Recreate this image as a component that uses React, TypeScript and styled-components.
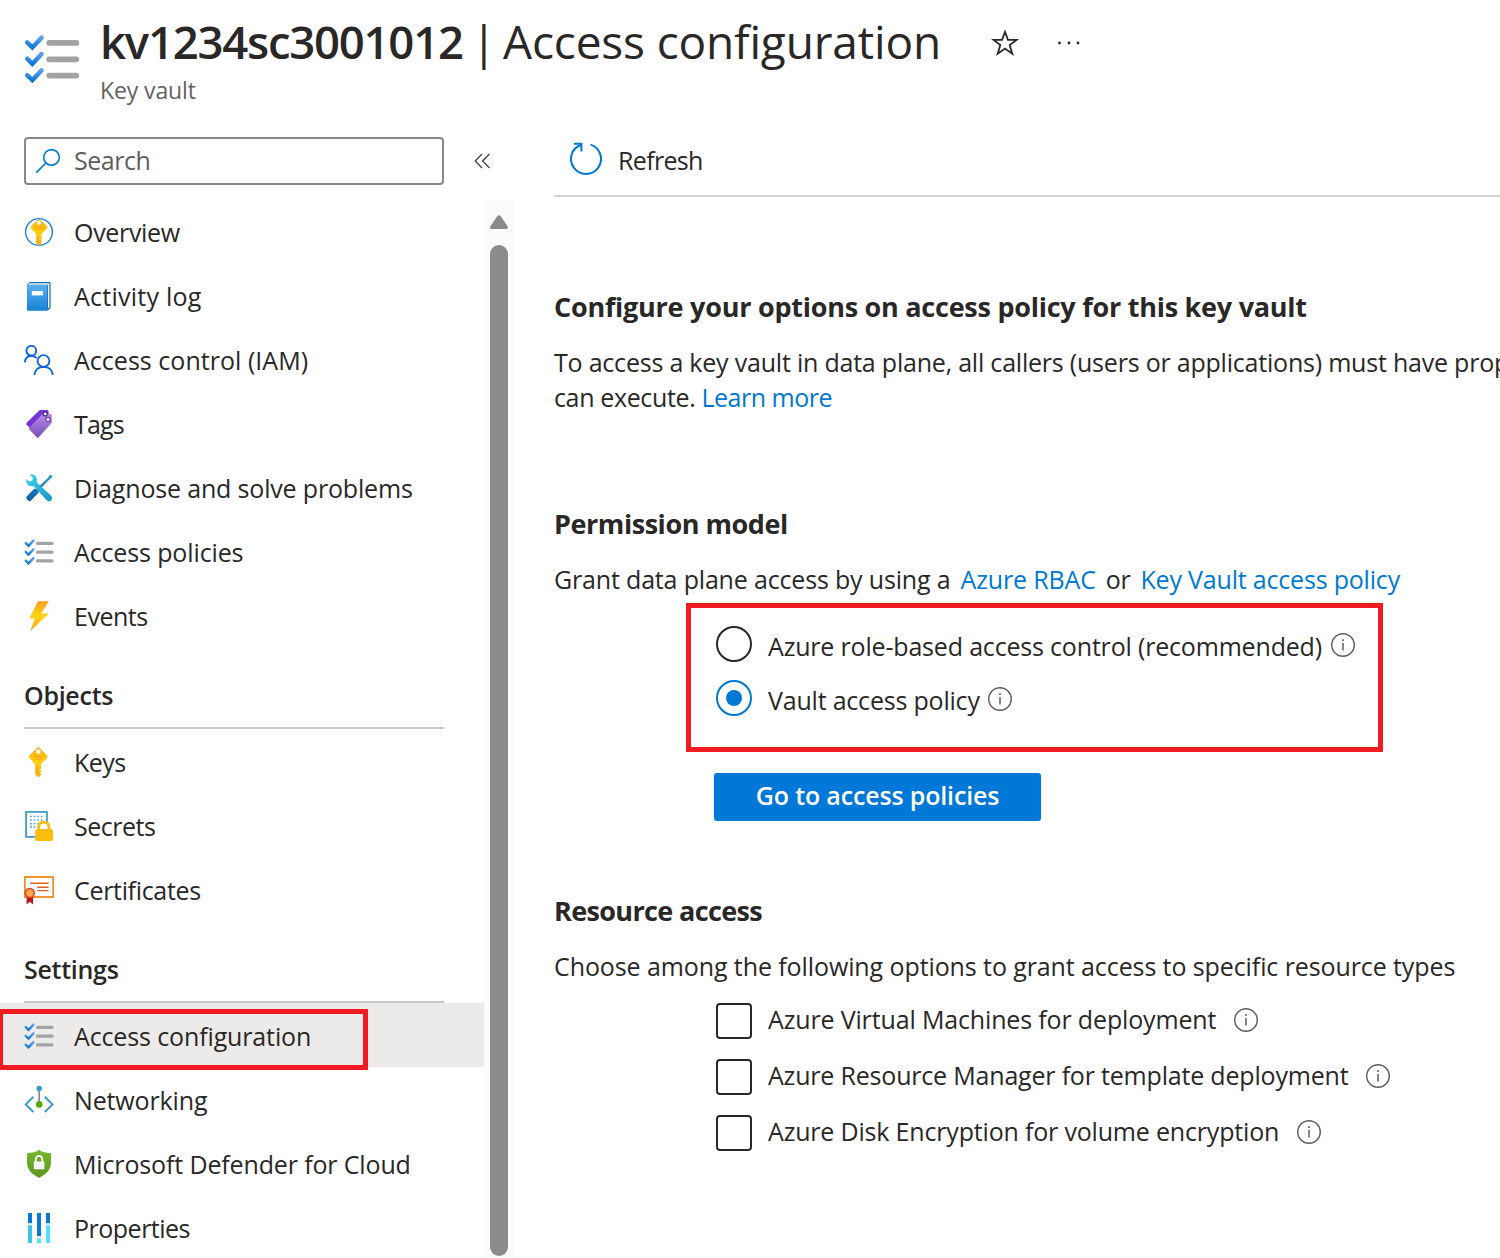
import React from "react";
import styled, { createGlobalStyle } from "styled-components";

const GlobalStyle = createGlobalStyle`
  *, *::before, *::after { box-sizing: border-box; }
  body { margin: 0; background: #fff; }
`;

const Page = styled.div`
  display: flex;
  flex-direction: column;
  width: 1500px;
  height: 1258px;
  overflow: hidden;
  background: #fff;
  color: #292827;
  font-family: "Open Sans", "Noto Sans", sans-serif;
  font-size: 25px;
  line-height: 35px;
  white-space: nowrap;
`;

const Label = styled.span<{ $ls?: number }>`
  letter-spacing: ${(p) => p.$ls ?? 0}px;
`;

/* ---------- header ---------- */

const Header = styled.header`
  display: flex;
  flex: none;
  height: 137px;
  padding-left: 24px;
`;

const HeaderIcon = styled.div`
  width: 76px;
  padding-top: 31px;
  svg { display: block; }
`;

const TitleRow = styled.div`
  display: flex;
  align-items: center;
  height: 64px;
  margin-top: 9px;
  font-size: 46px;
  line-height: 64px;
`;

const TitleName = styled.h1`
  width: 367px;
  margin: 0;
  font-size: 45.5px;
  font-weight: 640;
  letter-spacing: -1.24px;
`;

const TitleDivider = styled.span`
  width: 36px;
  text-align: center;
  padding-right: 2px;
`;

const TitlePage = styled.span`
  width: 488px;
  letter-spacing: -0.16px;
`;

const TitleActions = styled.div`
  display: flex;
  align-items: center;
  gap: 38px;
  padding-top: 4px;
  svg { display: block; }
`;

const Subtitle = styled.div`
  font-size: 23px;
  line-height: 34px;
  letter-spacing: -0.12px;
  color: #646260;
`;

/* ---------- sidebar ---------- */

const Body = styled.div`
  display: flex;
  flex: 1;
  min-height: 0;
`;

const Sidebar = styled.aside`
  display: flex;
  flex-direction: column;
  width: 514px;
  flex: none;
`;

const SearchRow = styled.div`
  display: flex;
  align-items: center;
  gap: 30px;
  height: 48px;
  margin: 0 0 14px 24px;
  flex: none;
`;

const SearchBox = styled.div`
  display: flex;
  align-items: center;
  width: 420px;
  height: 48px;
  padding: 0 0 1px 9px;
  border: 2px solid #8a8886;
  border-radius: 4px;
  color: #605e5c;
  svg { width: 26px; margin-right: 13px; }
`;

const MenuScroller = styled.div`
  display: flex;
  flex: 1;
  min-height: 0;
`;

const Menu = styled.nav`
  flex: none;
  width: 484px;
  overflow: hidden;
`;

const MenuItem = styled.div<{ $selected?: boolean }>`
  position: relative;
  display: flex;
  align-items: center;
  gap: 20px;
  height: 64px;
  padding: 2px 0 0 24px;
  background: ${(p) => (p.$selected ? "#edebe9" : "transparent")};
  svg { display: block; flex: none; }
`;

const ItemHighlight = styled.div`
  position: absolute;
  left: -2px;
  top: 6px;
  width: 370px;
  height: 61px;
  border: 5px solid #f01b23;
  z-index: 1;
`;

const MenuHeading = styled.h2`
  height: 82px;
  width: 420px;
  margin: 0 0 0 24px;
  padding-top: 31px;
  border-bottom: 2px solid #c8c8c8;
  font-size: 25px;
  font-weight: 600;
  line-height: 35px;
  letter-spacing: -0.28px;
`;

const ScrollTrack = styled.div`
  display: flex;
  flex-direction: column;
  align-items: center;
  width: 29px;
  margin-left: 1px;
  padding: 16px 1px 2px 0;
  background: #fcfcfc;
  svg { display: block; flex: none; }
`;

const ScrollThumb = styled.div`
  flex: 1;
  width: 18px;
  margin-top: 15px;
  border-radius: 9px;
  background: #8b8b8b;
`;

/* ---------- content ---------- */

const Main = styled.main`
  width: 946px;
  margin-left: 40px;
  overflow: hidden;
`;

const Toolbar = styled.div`
  display: flex;
  align-items: flex-start;
  gap: 16px;
  height: 60px;
  padding: 5px 0 0 16px;
  border-bottom: 2px solid #d4d4d4;
`;

const ToolbarLabel = styled.span`
  padding-top: 1px;
  letter-spacing: -0.66px;
`;

const SectionTitle = styled.h3<{ $top: number; $ls: number }>`
  margin: ${(p) => p.$top}px 0 20px;
  font-size: 27px;
  font-weight: 670;
  line-height: 36px;
  letter-spacing: ${(p) => p.$ls}px;
`;

const Paragraph = styled.p`
  margin: 0;
`;

const Link = styled.a<{ $ls: number }>`
  color: #0078d4;
  text-decoration: none;
  letter-spacing: ${(p) => p.$ls}px;
`;

const GrantLine = styled.p`
  display: flex;
  gap: 10px;
  margin: 0;
`;

const RadioGroup = styled.div`
  display: flex;
  flex-direction: column;
  gap: 18px;
  width: 697px;
  height: 149px;
  margin: 6px 0 21px 132px;
  padding: 18px 0 0 25px;
  border: 5px solid #f01b23;
`;

const Option = styled.div`
  display: flex;
  align-items: center;
  height: 36px;
`;

const OptionLabel = styled.span<{ $ls: number; $gap: number; $drop?: number }>`
  margin: ${(p) => (p.$drop ?? 0)}px ${(p) => p.$gap}px 0 16px;
  letter-spacing: ${(p) => p.$ls}px;
`;

const Radio = styled.span<{ $checked?: boolean }>`
  display: grid;
  place-items: center;
  width: 36px;
  height: 36px;
  border: 2px solid ${(p) => (p.$checked ? "#0078d4" : "#292827")};
  border-radius: 50%;
  &::after {
    content: "";
    width: 16px;
    height: 16px;
    border-radius: 50%;
    background: ${(p) => (p.$checked ? "#0078d4" : "transparent")};
  }
`;

const PrimaryButton = styled.button`
  display: block;
  width: 327px;
  height: 48px;
  margin: 0 0 0 160px;
  padding: 0 0 3px;
  border: 0;
  border-radius: 3px;
  background: #0078d7;
  color: #fff;
  font: 630 25px/35px "Open Sans", "Noto Sans", sans-serif;
  letter-spacing: -0.16px;
`;

const CheckGroup = styled.div`
  display: flex;
  flex-direction: column;
  gap: 20px;
  margin: 19px 0 0 162px;
`;

const CheckBox = styled.span`
  width: 36px;
  height: 36px;
  border: 2px solid #292827;
  border-radius: 4px;
`;

const InfoSvg = styled.svg<{ $shift: number }>`
  display: block;
  margin-top: ${(p) => p.$shift}px;
`;

/* ---------- icons ---------- */

const Info = ({ shift }: { shift: number }) => (
  <InfoSvg $shift={shift} width="24" height="24" viewBox="0 0 24 24" fill="none" stroke="#605e5c">
    <circle cx="12" cy="12" r="11.3" strokeWidth="1.4" />
    <path d="M12 10v7.6" strokeWidth="1.5" />
    <path d="M12 6.2v1.9" strokeWidth="1.7" />
  </InfoSvg>
);

const Star = () => (
  <svg width="28" height="28" viewBox="0 0 28 28" fill="none" stroke="#292827" strokeWidth="1.8">
    <path d="M14 2.8l2.9 8.1h8.6l-6.8 5.2 2.6 8.6-7.3-5.2-7.3 5.2 2.6-8.6-6.8-5.2h8.6z" />
  </svg>
);

const More = () => (
  <svg width="24" height="6" viewBox="0 0 24 6" fill="#292827">
    <circle cx="2.5" cy="3" r="1.4" />
    <circle cx="12" cy="3" r="1.4" />
    <circle cx="21" cy="3" r="1.4" />
  </svg>
);

const Checklist = ({ size = 30, id }: { size?: number; id: string }) => (
  <svg width={size} height={size} viewBox="0 0 30 30" fill="none" strokeLinecap="round">
    <defs>
      <linearGradient id={id} x1="0" y1="1" x2="0" y2="0">
        <stop offset="0" stopColor="#0f78d4" />
        <stop offset="1" stopColor="#5ea0ef" />
      </linearGradient>
    </defs>
    {[0, 8.75, 17.5].map((y) => (
      <g key={y}>
        <path d={`M1.7 ${6.1 + y}L4.5 ${8.8 + y}L9.4 ${3.6 + y}`} stroke={`url(#${id})`} strokeWidth="2.4" strokeLinejoin="miter" />
        <path d={`M13.5 ${6.4 + y}H28`} stroke="#a3a3a3" strokeWidth="3.1" />
      </g>
    ))}
  </svg>
);

const SearchIcon = () => (
  <svg width="26" height="26" viewBox="0 0 26 26" fill="none" stroke="#0078d4" strokeWidth="1.6">
    <circle cx="16.5" cy="9.4" r="7.8" />
    <path d="M10.9 15L1.3 24.6" />
  </svg>
);

const Collapse = () => (
  <svg width="17" height="16" viewBox="0 0 17 16" fill="none" stroke="#3b3a39" strokeWidth="1.2">
    <path d="M8 1L1.2 8L8 15M15.4 1L8.6 8L15.4 15" />
  </svg>
);

const RefreshIcon = () => (
  <svg width="32" height="34" viewBox="0 0 32 34" fill="none" stroke="#0078d4" strokeWidth="2">
    <path d="M20.5 2.6A15 15 0 1 1 11.2 2.7" />
    <path d="M4 1.8h7.4v7.6" />
  </svg>
);

const KeyShape = ({ gradient }: { gradient: string }) => (
  <>
    <path
      d="M13 1L5.6 8.2Q4.2 9.7 5.6 11.3L11.1 17.4V27.3L13.8 30H14.9L17.5 27.2L16 25.6L17.7 24L16.2 22.2L17.7 20.6L16.9 19.6V17.4L22.9 11.3Q24.3 9.7 22.9 8.2L15.6 1Q14.3 -0.3 13 1Z"
      fill={`url(#${gradient})`}
    />
    <circle cx="14.3" cy="4.5" r="2.3" fill="#fff" />
    <path d="M9.5 9.6h9.8M9.5 12h9.8" stroke="#fc9e12" strokeWidth="1" />
    <path d="M13.3 19.5v7.5" stroke="#fca70f" strokeWidth="1.2" />
  </>
);

const KeyGradient = ({ id }: { id: string }) => (
  <linearGradient id={id} x1="0" y1="0" x2="0" y2="1">
    <stop offset="0" stopColor="#fba51a" />
    <stop offset="0.45" stopColor="#fed30f" />
    <stop offset="1" stopColor="#fbae18" />
  </linearGradient>
);

const OverviewIcon = () => (
  <svg width="30" height="30" viewBox="0 0 30 30">
    <defs><KeyGradient id="keyOverview" /></defs>
    <circle cx="15" cy="15" r="13.4" fill="#fff" stroke="#2284d8" strokeWidth="1.4" />
    <g transform="translate(2.2 1.6) scale(.9)">
      <KeyShape gradient="keyOverview" />
    </g>
  </svg>
);

const KeyIcon = () => (
  <svg width="30" height="30" viewBox="0 0 30 30">
    <defs><KeyGradient id="keyPlain" /></defs>
    <KeyShape gradient="keyPlain" />
  </svg>
);

const BookIcon = () => (
  <svg width="30" height="30" viewBox="0 0 30 30">
    <defs>
      <linearGradient id="book" x1="0" y1="0" x2="0" y2="1">
        <stop offset="0" stopColor="#5ab0ee" />
        <stop offset="1" stopColor="#1583d8" />
      </linearGradient>
    </defs>
    <path d="M5.5 1H25.2Q26.6 1 26.6 2.4V26Q26.6 27.5 24.5 29L23 29.4H3.2V3.6Z" fill="#1b6eb2" />
    <path d="M5 2.2H25.4V26.2L24 27.6V3.8H4Z" fill="#eef6fc" />
    <path d="M3.2 4H23.2V29.4H4.2Q3.2 29.4 3.2 28.4Z" fill="url(#book)" />
    <rect x="7.8" y="10" width="11.2" height="4.4" fill="#fff" />
  </svg>
);

const PeopleIcon = () => (
  <svg width="30" height="30" viewBox="0 0 30 30" fill="none" stroke="#0f62de" strokeWidth="1.9">
    <circle cx="7.3" cy="5.8" r="4.9" />
    <path d="M0.9 17.4Q1.3 11 7.3 10.7Q10.6 10.8 12.7 13.2" />
    <circle cx="19.5" cy="16" r="5.9" />
    <path d="M10.4 30Q11.4 22 19.5 21.9Q27.7 22 28.8 30" />
  </svg>
);

const TagIcon = () => (
  <svg width="30" height="30" viewBox="0 0 30 30">
    <defs>
      <linearGradient id="tag" x1="0" y1="0" x2="0" y2="1">
        <stop offset="0" stopColor="#b78be6" />
        <stop offset="1" stopColor="#7a4fb8" />
      </linearGradient>
    </defs>
    <path d="M15.8 1H23Q24.6 1 24.6 2.6V9L9 21L5.8 19L2.4 15.2Q2 14.4 2.6 13.8Z" fill="#7334d8" />
    <path d="M18.6 4.8H26Q27.8 4.8 27.8 6.6V13.8L14.6 28.6Q13.8 29.2 13 28.4L5.4 20.4Q4.8 19.4 5.6 18.4Z" fill="url(#tag)" />
    <circle cx="21.2" cy="4.9" r="2" fill="#fff" stroke="#50248f" strokeWidth="1.2" />
    <circle cx="24" cy="10.5" r="2.1" fill="#fff" stroke="#7441b5" strokeWidth="1.2" />
  </svg>
);

const ToolsIcon = () => (
  <svg width="30" height="30" viewBox="0 0 30 30">
    <defs>
      <linearGradient id="wrench" x1="0" y1="0" x2="1" y2="1">
        <stop offset="0" stopColor="#35d6f5" />
        <stop offset="1" stopColor="#1e94bf" />
      </linearGradient>
      <linearGradient id="driver" x1="1" y1="0" x2="0" y2="1">
        <stop offset="0" stopColor="#2f9bc9" />
        <stop offset="1" stopColor="#0a5ea6" />
      </linearGradient>
    </defs>
    <path
      d="M27.8 1.8L28 4.4L25.4 6.4L14.4 17.8L14.8 19.4L7 27.4Q5.6 28.6 4.2 27.4L2.8 26Q1.6 24.8 2.8 23.2L10.2 15.8L12.4 16L23.9 5L25.4 2.6Z"
      fill="url(#driver)"
    />
    <path
      d="M5.6 1.4Q9.6 0.6 11.8 3.4Q13.6 6 12.8 9.4L27.2 22.8Q29 25 27.4 27.2Q25.2 29.4 22.8 27.6L9.6 13Q6.4 13.8 3.8 11.8Q1.6 9.6 2.2 6L5.4 8.6L8.4 7.8L8.8 4.6Z"
      fill="url(#wrench)"
    />
  </svg>
);

const BoltIcon = () => (
  <svg width="30" height="30" viewBox="0 0 30 30">
    <defs>
      <linearGradient id="bolt" x1="0" y1="0" x2="0" y2="1">
        <stop offset="0" stopColor="#fa9d20" />
        <stop offset="0.5" stopColor="#fed50f" />
        <stop offset="1" stopColor="#fba21d" />
      </linearGradient>
    </defs>
    <path d="M14 0.2H24.8L17.2 12.6H24.8L6.2 30.2L10.8 17.6H5.4Z" fill="url(#bolt)" />
  </svg>
);

const SecretIcon = () => (
  <svg width="30" height="30" viewBox="0 0 30 30">
    <rect x="2.1" y="0.9" width="20.8" height="25" fill="#fff" stroke="#3d9fcb" strokeWidth="1.8" />
    <path
      d="M6 5.5h13M6 9h13M6 12.6h13M6 16.2h8"
      stroke="#5cb4dc"
      strokeWidth="1.7"
      strokeDasharray="1.9 1.7"
    />
    <path d="M14.8 19V15.6Q15 11.4 19.8 11.2Q24.7 11.4 24.9 15.6V19" fill="#fff" stroke="#ffb913" strokeWidth="2.8" />
    <rect x="11.2" y="18" width="17.8" height="12" rx="1.6" fill="#ffbd10" />
  </svg>
);

const CertificateIcon = () => (
  <svg width="30" height="30" viewBox="0 0 30 30">
    <rect x="0.8" y="2" width="28.4" height="20" fill="#fff" stroke="#ee8c1c" strokeWidth="1.8" />
    <path d="M6.2 8.2h18.4M13.2 12.2h11.4M13.2 15.6h11.4" stroke="#d9661a" strokeWidth="1.4" />
    <path d="M2.6 19h6.4v10.4l-3.2-2.6-3.2 2.6z" fill="#b8191d" />
    <circle cx="5.8" cy="18" r="4.5" fill="#ffa94d" stroke="#e0402c" strokeWidth="1.5" />
  </svg>
);

const NetworkIcon = () => (
  <svg width="30" height="30" viewBox="0 0 30 30" fill="none">
    <path d="M15.2 4v14" stroke="#8a8a8a" strokeWidth="1.8" />
    <path d="M9.4 11.8L1.8 19.4L9.4 27M20.8 11.8L28.4 19.4L20.8 27" stroke="#3e9bcb" strokeWidth="2" />
    <circle cx="15.2" cy="3.4" r="2.7" fill="#3999c6" />
    <circle cx="15.2" cy="19.4" r="3.3" fill="#5aa50b" />
  </svg>
);

const ShieldIcon = () => (
  <svg width="30" height="30" viewBox="0 0 30 30">
    <defs>
      <linearGradient id="shield" x1="0" y1="0" x2="0" y2="1">
        <stop offset="0" stopColor="#78b82c" />
        <stop offset="1" stopColor="#5c9420" />
      </linearGradient>
    </defs>
    <path
      d="M15 0.8Q19 4 27 4.2V14.5Q27 22.5 15.8 28.6Q15 29 14.2 28.6Q3 22.5 3 14.5V4.2Q11 4 15 0.8Z"
      fill="url(#shield)"
    />
    <path d="M11.7 13V10.4Q12 7 15 6.9Q18 7 18.3 10.4V13" fill="none" stroke="#fff" strokeWidth="1.9" />
    <rect x="9.8" y="12.4" width="10.6" height="7.8" rx="0.8" fill="#f5f5f5" />
  </svg>
);

const PropertiesIcon = () => (
  <svg width="30" height="30" viewBox="0 0 30 30">
    <path d="M4 0h4v10.2h-4zM13 0h4v23h-4zM22 0h4v10.2h-4z" fill="#0b78d4" />
    <path d="M4 12.2h4V30h-4z" fill="#3cc4e4" />
    <path d="M13 25.4h4V30h-4zM22 12.2h4V30h-4z" fill="#50e2fb" />
    <path d="M3.2 11h5.6M12.2 24.2h5.6M21.2 11h5.6" stroke="#d5dde0" strokeWidth="1" />
  </svg>
);

const ScrollUp = () => (
  <svg width="18" height="15" viewBox="0 0 18 15">
    <path d="M7.2 1.2Q9 -0.8 10.8 1.2L17.6 11.2Q18.6 14 16.4 14H1.6Q-0.6 14 0.4 11.2Z" fill="#8b8b8b" />
  </svg>
);

/* ---------- data ---------- */

type Entry = { label: string; icon: React.ReactNode; ls?: number; selected?: boolean };

const general: Entry[] = [
  { label: "Overview", icon: <OverviewIcon />, ls: -0.32 },
  { label: "Activity log", icon: <BookIcon />, ls: 0.25 },
  { label: "Access control (IAM)", icon: <PeopleIcon />, ls: 0.03 },
  { label: "Tags", icon: <TagIcon />, ls: -0.8 },
  { label: "Diagnose and solve problems", icon: <ToolsIcon />, ls: -0.17 },
  { label: "Access policies", icon: <Checklist id="checkPolicies" />, ls: -0.13 },
  { label: "Events", icon: <BoltIcon />, ls: -0.5 },
];

const objects: Entry[] = [
  { label: "Keys", icon: <KeyIcon />, ls: -0.5 },
  { label: "Secrets", icon: <SecretIcon />, ls: -0.5 },
  { label: "Certificates", icon: <CertificateIcon />, ls: -0.32 },
];

const settings: Entry[] = [
  { label: "Access configuration", icon: <Checklist id="checkConfig" />, ls: -0.13, selected: true },
  { label: "Networking", icon: <NetworkIcon />, ls: -0.14 },
  { label: "Microsoft Defender for Cloud", icon: <ShieldIcon />, ls: -0.14 },
  { label: "Properties", icon: <PropertiesIcon />, ls: -0.5 },
];

const checks = [
  { label: "Azure Virtual Machines for deployment", ls: -0.15, gap: 18 },
  { label: "Azure Resource Manager for template deployment", ls: -0.19, gap: 18 },
  { label: "Azure Disk Encryption for volume encryption", ls: -0.18, gap: 18 },
];

const MenuList = ({ items }: { items: Entry[] }) => (
  <>
    {items.map((item) => (
      <MenuItem key={item.label} $selected={item.selected}>
        {item.icon}
        <Label $ls={item.ls}>{item.label}</Label>
        {item.selected && <ItemHighlight />}
      </MenuItem>
    ))}
  </>
);

export default function App() {
  return (
    <Page>
      <GlobalStyle />
      <Header>
        <HeaderIcon><Checklist id="checkHeader" size={56} /></HeaderIcon>
        <div>
          <TitleRow>
            <TitleName>kv1234sc3001012</TitleName>
            <TitleDivider>|</TitleDivider>
            <TitlePage>Access configuration</TitlePage>
            <TitleActions><Star /><More /></TitleActions>
          </TitleRow>
          <Subtitle>Key vault</Subtitle>
        </div>
      </Header>
      <Body>
        <Sidebar>
          <SearchRow>
            <SearchBox><SearchIcon /><Label $ls={-0.45}>Search</Label></SearchBox>
            <Collapse />
          </SearchRow>
          <MenuScroller>
            <Menu>
              <MenuList items={general} />
              <MenuHeading>Objects</MenuHeading>
              <MenuList items={objects} />
              <MenuHeading>Settings</MenuHeading>
              <MenuList items={settings} />
            </Menu>
            <ScrollTrack><ScrollUp /><ScrollThumb /></ScrollTrack>
          </MenuScroller>
        </Sidebar>
        <Main>
          <Toolbar><RefreshIcon /><ToolbarLabel>Refresh</ToolbarLabel></Toolbar>

          <SectionTitle $top={92} $ls={-0.25}>Configure your options on access policy for this key vault</SectionTitle>
          <Paragraph>
            <Label $ls={-0.21}>To access a key vault in data plane, all callers (users or applications) must have proper</Label>
            <br />
            <Label $ls={-0.36}>can execute. </Label>
            <Link $ls={-0.5}>Learn more</Link>
          </Paragraph>

          <SectionTitle $top={91} $ls={-0.45}>Permission model</SectionTitle>
          <GrantLine>
            <Label $ls={-0.17}>Grant data plane access by using a</Label>
            <Link $ls={-0.14}>Azure RBAC</Link>
            <Label $ls={-0.3}>or</Label>
            <Link $ls={-0.19}>Key Vault access policy</Link>
          </GrantLine>
          <RadioGroup>
            <Option>
              <Radio />
              <OptionLabel $ls={-0.18} $gap={9} $drop={4}>Azure role-based access control (recommended)</OptionLabel>
              <Info shift={2} />
            </Option>
            <Option>
              <Radio $checked />
              <OptionLabel $ls={-0.2} $gap={8} $drop={4}>Vault access policy</OptionLabel>
              <Info shift={2} />
            </Option>
          </RadioGroup>
          <PrimaryButton>Go to access policies</PrimaryButton>

          <SectionTitle $top={72} $ls={-0.64}>Resource access</SectionTitle>
          <Paragraph>
            <Label $ls={-0.095}>Choose among the following options to grant access to specific resource types</Label>
          </Paragraph>
          <CheckGroup>
            {checks.map((c) => (
              <Option key={c.label}>
                <CheckBox />
                <OptionLabel $ls={c.ls} $gap={c.gap} $drop={-3}>{c.label}</OptionLabel>
                <Info shift={-2} />
              </Option>
            ))}
          </CheckGroup>
        </Main>
      </Body>
    </Page>
  );
}
